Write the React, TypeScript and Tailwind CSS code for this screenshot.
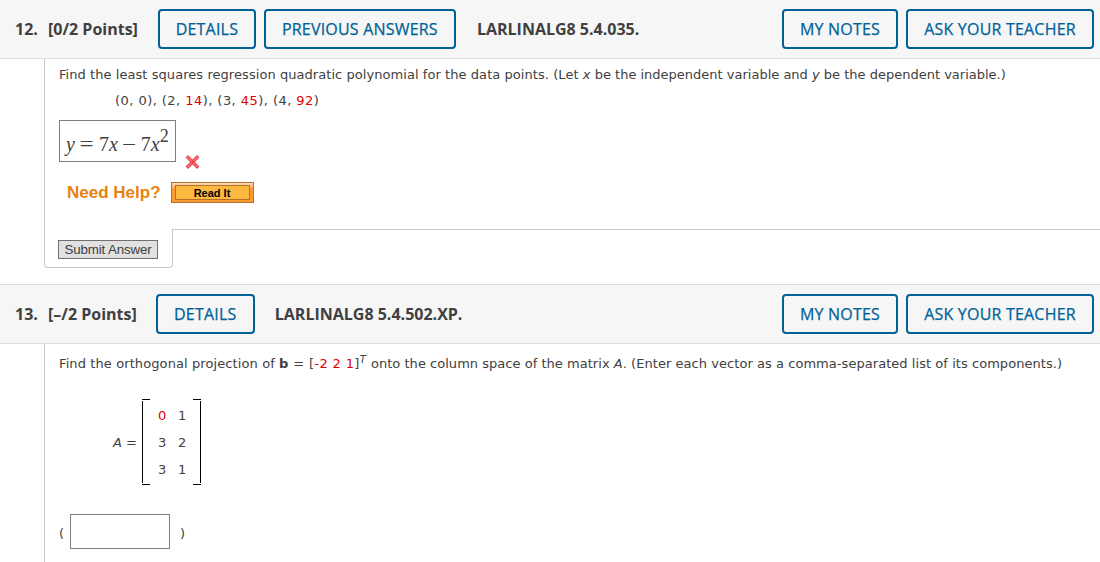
import React from 'react';

const OutlineButton: React.FC<{ className: string; children: React.ReactNode }> = ({ className, children }) => (
  <button
    className={`h-10 shrink-0 rounded border-2 border-[#006298] text-center text-base font-medium tracking-[0.2px] whitespace-nowrap text-[#006298] [-webkit-text-stroke:0.25px_#006298] ${className}`}
  >
    {children}
  </button>
);

type HeaderProps = {
  number: string;
  points: string;
  code: string;
  children: React.ReactNode;
};

const QuestionHeader: React.FC<HeaderProps> = ({ number, points, code, children }) => (
  <header className="flex h-[59px] items-center border-b border-[#dcdcdc] bg-[#f6f6f6] pr-1.5 pl-[15px] font-['Open_Sans',sans-serif] text-base font-bold whitespace-nowrap text-[#404040]">
    <span className="w-[33px]">{number}</span>
    <span>{points}</span>
    {children}
    <span>{code}</span>
    <div className="ml-auto flex gap-2">
      <OutlineButton className="w-[116px]">MY NOTES</OutlineButton>
      <OutlineButton className="w-[188px]">ASK YOUR TEACHER</OutlineButton>
    </div>
  </header>
);

const Red: React.FC<{ children: React.ReactNode }> = ({ children }) => (
  <span className="text-[#dd0000]">{children}</span>
);

const matrix = [
  ['0', '1'],
  ['3', '2'],
  ['3', '1'],
];

export default function App() {
  return (
    <main className="h-[562px] w-[1100px] overflow-hidden bg-white font-['DejaVu_Sans',sans-serif] text-[13px] text-[#404040]">
      <section className="mb-4">
        <QuestionHeader number="12." points="[0/2 Points]" code="LARLINALG8 5.4.035.">
          <div className="mr-[21px] ml-5 flex gap-2">
            <OutlineButton className="w-[98px]">DETAILS</OutlineButton>
            <OutlineButton className="w-[192px]">PREVIOUS ANSWERS</OutlineButton>
          </div>
        </QuestionHeader>

        <div className="ml-11 h-[170px] border-l border-[#c8c8c8] pt-[7px] pl-3.5">
          <p className="leading-[18px] whitespace-nowrap">
            <span className="tracking-[0.06px]">
              Find the least squares regression quadratic polynomial for the data points. (Let{' '}
            </span>
            <i>x</i> be the independent variable and <i>y</i> be the dependent variable.)
          </p>
          <p className="mt-2 pl-14 leading-[18px] tracking-[0.45px] whitespace-nowrap">
            (0, 0), (2, <Red>14</Red>), (3, <Red>45</Red>), (4, <Red>92</Red>)
          </p>
          <div className="mt-2.5 flex items-end">
            <div className="flex h-[42px] w-[117px] items-baseline border border-[#808080] pt-2 pl-1.5 font-['Liberation_Serif',serif] text-[20px] leading-[30px] whitespace-nowrap">
              <i>y</i>
              <span className="ml-[5px] inline-block w-[13px] scale-x-125 text-center">=</span>
              <span className="ml-1.5">7</span>
              <i>x</i>
              <span className="mr-1.5 ml-[5px] inline-block w-3 scale-x-125 text-center">−</span>
              <span>7</span>
              <i>x</i>
              <span className="relative -top-[9px] text-[18px] leading-none">2</span>
            </div>
            <svg className="-mb-[7px] ml-[9px]" width="15" height="14" viewBox="0 0 15 14" strokeLinecap="square">
              <path d="M3 2.5 12 11.5M12 2.5 3 11.5" stroke="#ee4450" strokeWidth="3.4" />
              <path d="M3 2.5 12 11.5M12 2.5 3 11.5" stroke="#ff7272" strokeWidth="1.4" />
              <path d="M6 7 7.5 5.5 9 7 7.5 8.5Z" fill="#e63946" />
            </svg>
          </div>
          <div className="mt-5 flex items-center pl-2">
            <span className="w-[104px] font-['Liberation_Sans',sans-serif] text-[17px] leading-[21px] font-bold whitespace-nowrap text-[#e9820c]">
              Need Help?
            </span>
            <button className="h-[21px] w-[83px] border border-[#b5712a] bg-gradient-to-b from-[#ffe0c0] via-[#ff9c33] via-30% to-[#fb9a30] p-[2px_3px]">
              <span className="block h-[15px] border border-[#b5712a] bg-[#fdb93f] pr-px font-['Liberation_Sans',sans-serif] text-[11px] leading-[14px] font-bold text-black">
                Read It
              </span>
            </button>
          </div>
        </div>

        <div className="flex pl-11">
          <div className="h-[39px] w-[129px] rounded-b border-r border-b border-l border-[#c8c8c8] pt-[11px] pl-[13px]">
            <button className="block h-[19px] w-[100px] border border-[#707070] bg-[#e1e1e1] font-['Liberation_Sans',sans-serif] text-[13.33px] leading-[17px] tracking-[-0.15px] whitespace-nowrap">
              Submit Answer
            </button>
          </div>
          <div className="flex-1 border-t border-[#c8c8c8]" />
        </div>
      </section>

      <section>
        <div className="border-t border-[#dcdcdc]">
          <QuestionHeader number="13." points="[–/2 Points]" code="LARLINALG8 5.4.502.XP.">
            <div className="mr-5 ml-[19px]">
              <OutlineButton className="w-[99px]">DETAILS</OutlineButton>
            </div>
          </QuestionHeader>
        </div>

        <div className="ml-11 h-[218px] border-l border-[#c8c8c8] pt-[11px] pl-3.5">
          <p className="leading-[18px] whitespace-nowrap">
            <span className="tracking-[0.1px]">Find the orthogonal projection of </span>
            <span className="tracking-[0.35px]">
              <b>b</b> = [<Red>-2 2 1</Red>]
            </span>
            <sup className="mr-px text-[10px] italic">T</sup>{' '}
            <span className="tracking-[0.03px]">
              onto the column space of the matrix <i>A</i>.{' '}
            </span>
            <span className="tracking-[0.05px]">
              (Enter each vector as a comma-separated list of its components.)
            </span>
          </p>

          <div className="mt-[26px] flex items-center pl-[54px]">
            <span className="w-[29px] pt-0.5 whitespace-nowrap">
              <i>A</i> =
            </span>
            <svg width="8" height="86" viewBox="0 0 8 86" fill="none" stroke="#000">
              <path d="M0 .5H8M.5 2V84M0 85.5H8" />
            </svg>
            <div className="grid w-[43px] grid-cols-[20px_20px] pl-2">
              {matrix.flatMap((row, r) =>
                row.map((value, c) => (
                  <span key={`${r}-${c}`} className="leading-[27px]">
                    {r === 0 && c === 0 ? <Red>{value}</Red> : value}
                  </span>
                )),
              )}
            </div>
            <svg width="8" height="86" viewBox="0 0 8 86" fill="none" stroke="#000">
              <path d="M0 .5H8M7.5 2V84M0 85.5H8" />
            </svg>
          </div>

          <div className="mt-[29px] flex items-center">
            <span className="w-[11px] pt-[5px]">(</span>
            <input className="h-[35px] w-[100px] border border-[#808080] bg-white" />
            <span className="ml-2.5 pt-[5px]">)</span>
          </div>
        </div>
      </section>
    </main>
  );
}
